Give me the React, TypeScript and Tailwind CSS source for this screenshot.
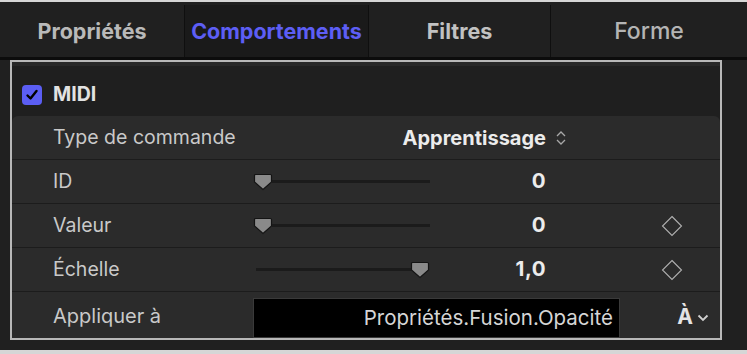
import React from "react";

const font = { fontFamily: "Inter, 'Liberation Sans', sans-serif" };

function Thumb() {
  return (
    <svg width="20" height="18" viewBox="0 0 20 18" className="shrink-0">
      <path d="M2.5 1.5 H17.5 Q18.5 1.5 18.5 2.5 V9 L10 16.5 L1.5 9 V2.5 Q1.5 1.5 2.5 1.5 Z" fill="#8a8a8a" stroke="#141414" strokeWidth="1.2" />
    </svg>
  );
}

function Diamond() {
  return (
    <svg width="22" height="22" viewBox="0 0 22 22">
      <path d="M11 1.5 L20.5 11 L11 20.5 L1.5 11 Z" fill="none" stroke="#b0b0b0" strokeWidth="1.1" />
    </svg>
  );
}

function Row({ children, last }: { children: React.ReactNode; last?: boolean }) {
  return (
    <div className={`flex items-center ${last ? "h-[46px]" : "h-[44px] border-b border-[#1c1c1c]"}`}>
      {children}
    </div>
  );
}

function SliderRow({ label, value, pos, diamond }: { label: string; value: string; pos: "left" | "right"; diamond?: boolean }) {
  return (
    <Row>
      <div className="w-[241px] pl-[41px] text-[19.5px] text-[#c9c9c9]">{label}</div>
      <div className="w-[177px] h-[18px] flex items-center">
        {pos === "left" ? (
          <>
            <Thumb />
            <div className="flex-1 h-[3px] bg-[#1b1b1b] -ml-[1px]" />
          </>
        ) : (
          <>
            <div className="w-[162px] h-[3px] bg-[#1b1b1b] ml-[3px]" />
            <div className="-ml-[4px]"><Thumb /></div>
          </>
        )}
      </div>
      <div className="w-[116px] text-right text-[20.5px] font-bold text-[#ececec] tracking-[0.5px]">{value}</div>
      <div className="w-[137px] flex justify-end">{diamond && <Diamond />}</div>
    </Row>
  );
}

export default function App() {
  return (
    <div className="w-[747px] h-[354px] bg-[#202020] flex flex-col overflow-hidden" style={font}>
      <div className="h-[2px] bg-[#d6d6d6]" />
      <div className="h-[55px] flex bg-[#202020] text-[21.5px] pt-[3px]">
        <div className="w-[185px] flex items-center justify-center font-bold text-[#b9b9b9] border-r border-[#0f0f0f]">Propriétés</div>
        <div className="w-[184px] flex items-center justify-center font-bold text-[#5d5ef5] bg-[#1a1a1a] border-r border-[#0f0f0f]">Comportements</div>
        <div className="w-[182px] flex items-center justify-center font-bold text-[#c2c2c2] border-r border-[#0f0f0f]">Filtres</div>
        <div className="flex-1 flex items-center justify-center font-medium text-[#b4b4b4] text-[23px]">Forme</div>
      </div>
      <div className="h-[3px] bg-[#0c0c0c]" />
      <div className="flex">
        <div className="ml-[10px] w-[712px] h-[280px] border-2 border-[#b8b8b8] bg-[#1f1f1f] flex flex-col">
          <div className="h-[4px] bg-[#282828]" />
          <div className="h-[51px] flex items-center pl-[10px] pt-[8px] gap-[11px]">
            <div className="w-[20px] h-[20px] rounded-[4px] bg-[#5b5ef4] flex items-center justify-center">
              <svg width="14" height="14" viewBox="0 0 14 14">
                <path d="M2.5 7.5 L5.5 10.5 L11.5 3" fill="none" stroke="#000" strokeWidth="2.4" strokeLinecap="round" strokeLinejoin="round" />
              </svg>
            </div>
            <div className="text-[19.5px] font-bold text-[#e2e2e2]">MIDI</div>
          </div>
          <div className="flex-1 bg-[#2b2b2b] rounded-t-[6px] flex flex-col">
            <Row>
              <div className="w-[241px] pl-[41px] text-[19.5px] text-[#c9c9c9] whitespace-nowrap overflow-hidden">Type de commande</div>
              <div className="w-[293px] flex justify-end text-[20px] font-bold text-[#ececec]">Apprentissage</div>
              <svg width="14" height="20" viewBox="0 0 14 20" className="ml-[8px]">
                <path d="M3 8 L7 4 L11 8 M3 12 L7 16 L11 12" fill="none" stroke="#a8a8a8" strokeWidth="1.3" />
              </svg>
            </Row>
            <SliderRow label="ID" value="0" pos="left" />
            <SliderRow label="Valeur" value="0" pos="left" diamond />
            <SliderRow label="Échelle" value="1,0" pos="right" diamond />
            <Row last>
              <div className="w-[241px] pl-[41px] text-[20px] text-[#c9c9c9] self-start pt-[9px]">Appliquer à</div>
              <div className="self-end w-[367px] h-[40px] bg-black border border-[#3a3a3a] flex items-center justify-end pr-[6px] text-[20.5px] text-[#d6d6d6]">
                Propriétés.Fusion.Opacité
              </div>
              <div className="flex-1 flex items-center justify-end pr-[11px] self-start pt-[9px]">
                <span className="text-[21px] font-bold text-[#e4e4e4]">À</span>
                <svg width="12" height="8" viewBox="0 0 12 8" className="ml-[4px] mt-[3px]">
                  <path d="M1.5 1.5 L6 6 L10.5 1.5" fill="none" stroke="#d0d0d0" strokeWidth="1.8" />
                </svg>
              </div>
            </Row>
          </div>
        </div>
      </div>
      <div className="flex-1" />
      <div className="h-[4px] bg-[#d6d6d6]" />
    </div>
  );
}
